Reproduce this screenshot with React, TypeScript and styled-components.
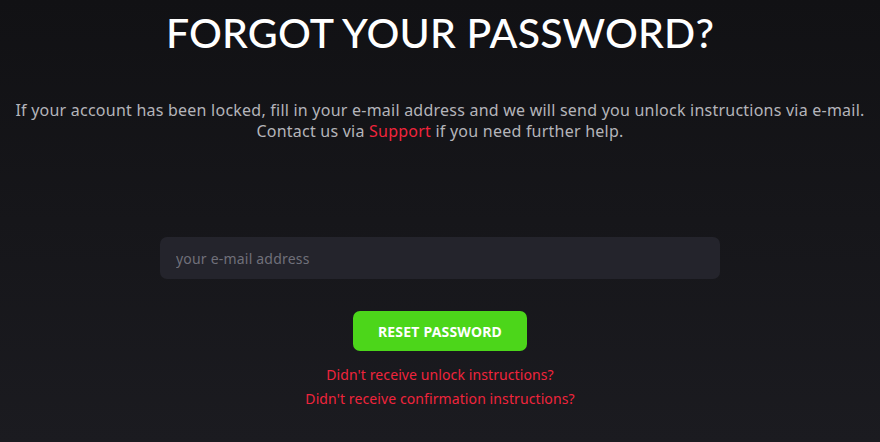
import React from 'react';
import styled, {createGlobalStyle} from "styled-components";

const GlobalStyle = createGlobalStyle`
  html, body {
    margin: 0;
    padding: 0;
  }
  body {
    background: linear-gradient(180deg, #111114 0%, #1b1b20 100%);
    min-height: 100vh;
    font-family: "Noto Sans", Lato, sans-serif;
  }
`

const App = () => {
    return (
        <Page>
            <GlobalStyle/>
            <Title>FORGOT YOUR PASSWORD?</Title>
            <Intro>
                If your account has been locked, fill in your e-mail address and we will send you unlock instructions via e-mail.
                <br/>
                Contact us via <RedLink href="#">Support</RedLink> if you need further help.
            </Intro>
            <Form onSubmit={e => e.preventDefault()}>
                <EmailInput type="email" placeholder="your e-mail address"/>
                <SubmitButton type="submit">RESET PASSWORD</SubmitButton>
                <Links>
                    <SmallLink href="#">Didn't receive unlock instructions?</SmallLink>
                    <SmallLink href="#">Didn't receive confirmation instructions?</SmallLink>
                </Links>
            </Form>
        </Page>
    );
};

export default App;

const Page = styled.div`
  height: 442px;
  display: flex;
  flex-direction: column;
  align-items: center;
  padding-top: 8px;
  box-sizing: border-box;
`
const Title = styled.h1`
  margin: 0;
  color: #ffffff;
  font-family: Lato, "Noto Sans", sans-serif;
  font-weight: 500;
  font-size: 41px;
  line-height: 50px;
  letter-spacing: 0.2px;
`
const Intro = styled.p`
  margin: 42px 0 0;
  color: #b4b4ba;
  font-size: 16px;
  line-height: 21px;
  letter-spacing: 0.23px;
  text-align: center;
  white-space: nowrap;
`
const RedLink = styled.a`
  color: #f0243c;
  text-decoration: none;
`
const Form = styled.form`
  margin-top: 95px;
  display: flex;
  flex-direction: column;
  align-items: center;
`
const EmailInput = styled.input`
  width: 560px;
  height: 42px;
  box-sizing: border-box;
  background: #24242c;
  border: none;
  border-radius: 7px;
  padding: 0 16px;
  color: #d0d0d6;
  font-family: "Noto Sans", Lato, sans-serif;
  font-size: 14px;
  letter-spacing: 0.2px;

  &::placeholder {
    color: #70707a;
  }

  &:focus {
    outline: none;
  }
`
const SubmitButton = styled.button`
  margin-top: 32px;
  width: 174px;
  height: 40px;
  background: #4cd61a;
  border: none;
  border-radius: 7px;
  color: #ffffff;
  font-family: "Noto Sans", Lato, sans-serif;
  font-weight: 700;
  font-size: 14px;
  letter-spacing: 0.2px;
  cursor: pointer;
`
const Links = styled.div`
  margin-top: 14px;
  display: flex;
  flex-direction: column;
  align-items: center;
  gap: 5px;
`
const SmallLink = styled.a`
  color: #f0243c;
  font-size: 14px;
  line-height: 19px;
  letter-spacing: 0.1px;
  text-decoration: none;
`
